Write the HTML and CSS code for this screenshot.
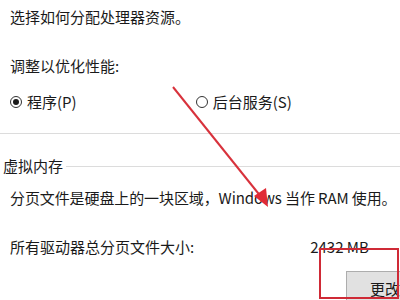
FILE: index.html
```html
<!DOCTYPE html>
<html lang="zh-CN">
<head>
    <meta charset="UTF-8">
    <title>性能选项</title>
    <link rel="stylesheet" href="styles.css">
</head>
<body>
    <div class="processor">
        <p class="desc">选择如何分配处理器资源。</p>
        <p class="label">调整以优化性能:</p>
        <div class="radios">
            <label class="radio checked"><span class="dot"></span>程序(P)</label>
            <label class="radio"><span class="dot"></span>后台服务(S)</label>
        </div>
    </div>
    <div class="divider"></div>

    <div class="group-title">
        <span>虚拟内存</span>
        <div class="line"></div>
    </div>
    <div class="memory">
        <p class="desc">分页文件是硬盘上的一块区域，Windows 当作 RAM 使用。</p>
        <div class="size-row">
            <span>所有驱动器总分页文件大小:</span>
            <span class="size">2432 MB</span>
        </div>
        <div class="actions">
            <button type="button">更改</button>
        </div>
    </div>

    <!-- 标注 -->
    <svg class="marks" width="400" height="300" viewBox="0 0 400 300">
        <line x1="173" y1="87" x2="262" y2="198" stroke="#d8323c" stroke-width="2"/>
        <polygon points="268,207 254,196 266,188" fill="#e02a35"/>
        <rect x="320" y="249" width="78" height="49" fill="none" stroke="#cf2a36" stroke-width="2"/>
    </svg>
</body>
</html>
```

FILE: styles.css
```css
body {
    margin: 0;
    width: 400px;
    height: 300px;
    overflow: hidden;
    position: relative;
    background-color: #fff;
    color: #1a1a1a;
    font-family: "Noto Sans CJK SC", "Noto Sans", sans-serif;
    font-size: 15px;
    line-height: 20px;
}

p {
    margin: 0;
}

.processor {
    padding: 7px 10px 0;
    height: 126px;
}

.processor .label {
    margin-top: 29px;
}

.radios {
    display: flex;
    margin-top: 16px;
}

.radio {
    display: flex;
    align-items: center;
    gap: 5px;
}

.radio + .radio {
    margin-left: 119px;
}

.radio .dot {
    width: 10px;
    height: 10px;
    border: 1px solid #333;
    border-radius: 50%;
    position: relative;
}

.radio.checked .dot::after {
    content: "";
    position: absolute;
    left: 2px;
    top: 2px;
    width: 6px;
    height: 6px;
    border-radius: 50%;
    background-color: #1a1a1a;
}

.divider {
    border-top: 1px solid #dcdcdc;
}

.group-title {
    display: flex;
    align-items: center;
    gap: 3px;
    padding-left: 3px;
    margin-top: 22px;
}

.group-title .line {
    flex: 1;
    border-top: 1px solid #dcdcdc;
}

.memory {
    padding: 0 10px;
}

.memory .desc {
    margin-top: 12px;
    white-space: nowrap;
    letter-spacing: -0.1px;
}

.size-row {
    display: flex;
    margin-top: 29px;
}

.size-row .size {
    margin-left: 116px;
}

.actions {
    margin-top: 14px;
    padding-left: 336px;
}

.actions button {
    width: 80px;
    height: 34px;
    padding: 0 0 0 23px;
    text-align: left;
    font-family: inherit;
    font-size: 15px;
    color: #1a1a1a;
    background-color: #e1e1e1;
    border: 1px solid #adadad;
}

.marks {
    position: absolute;
    left: 0;
    top: 0;
}
```
